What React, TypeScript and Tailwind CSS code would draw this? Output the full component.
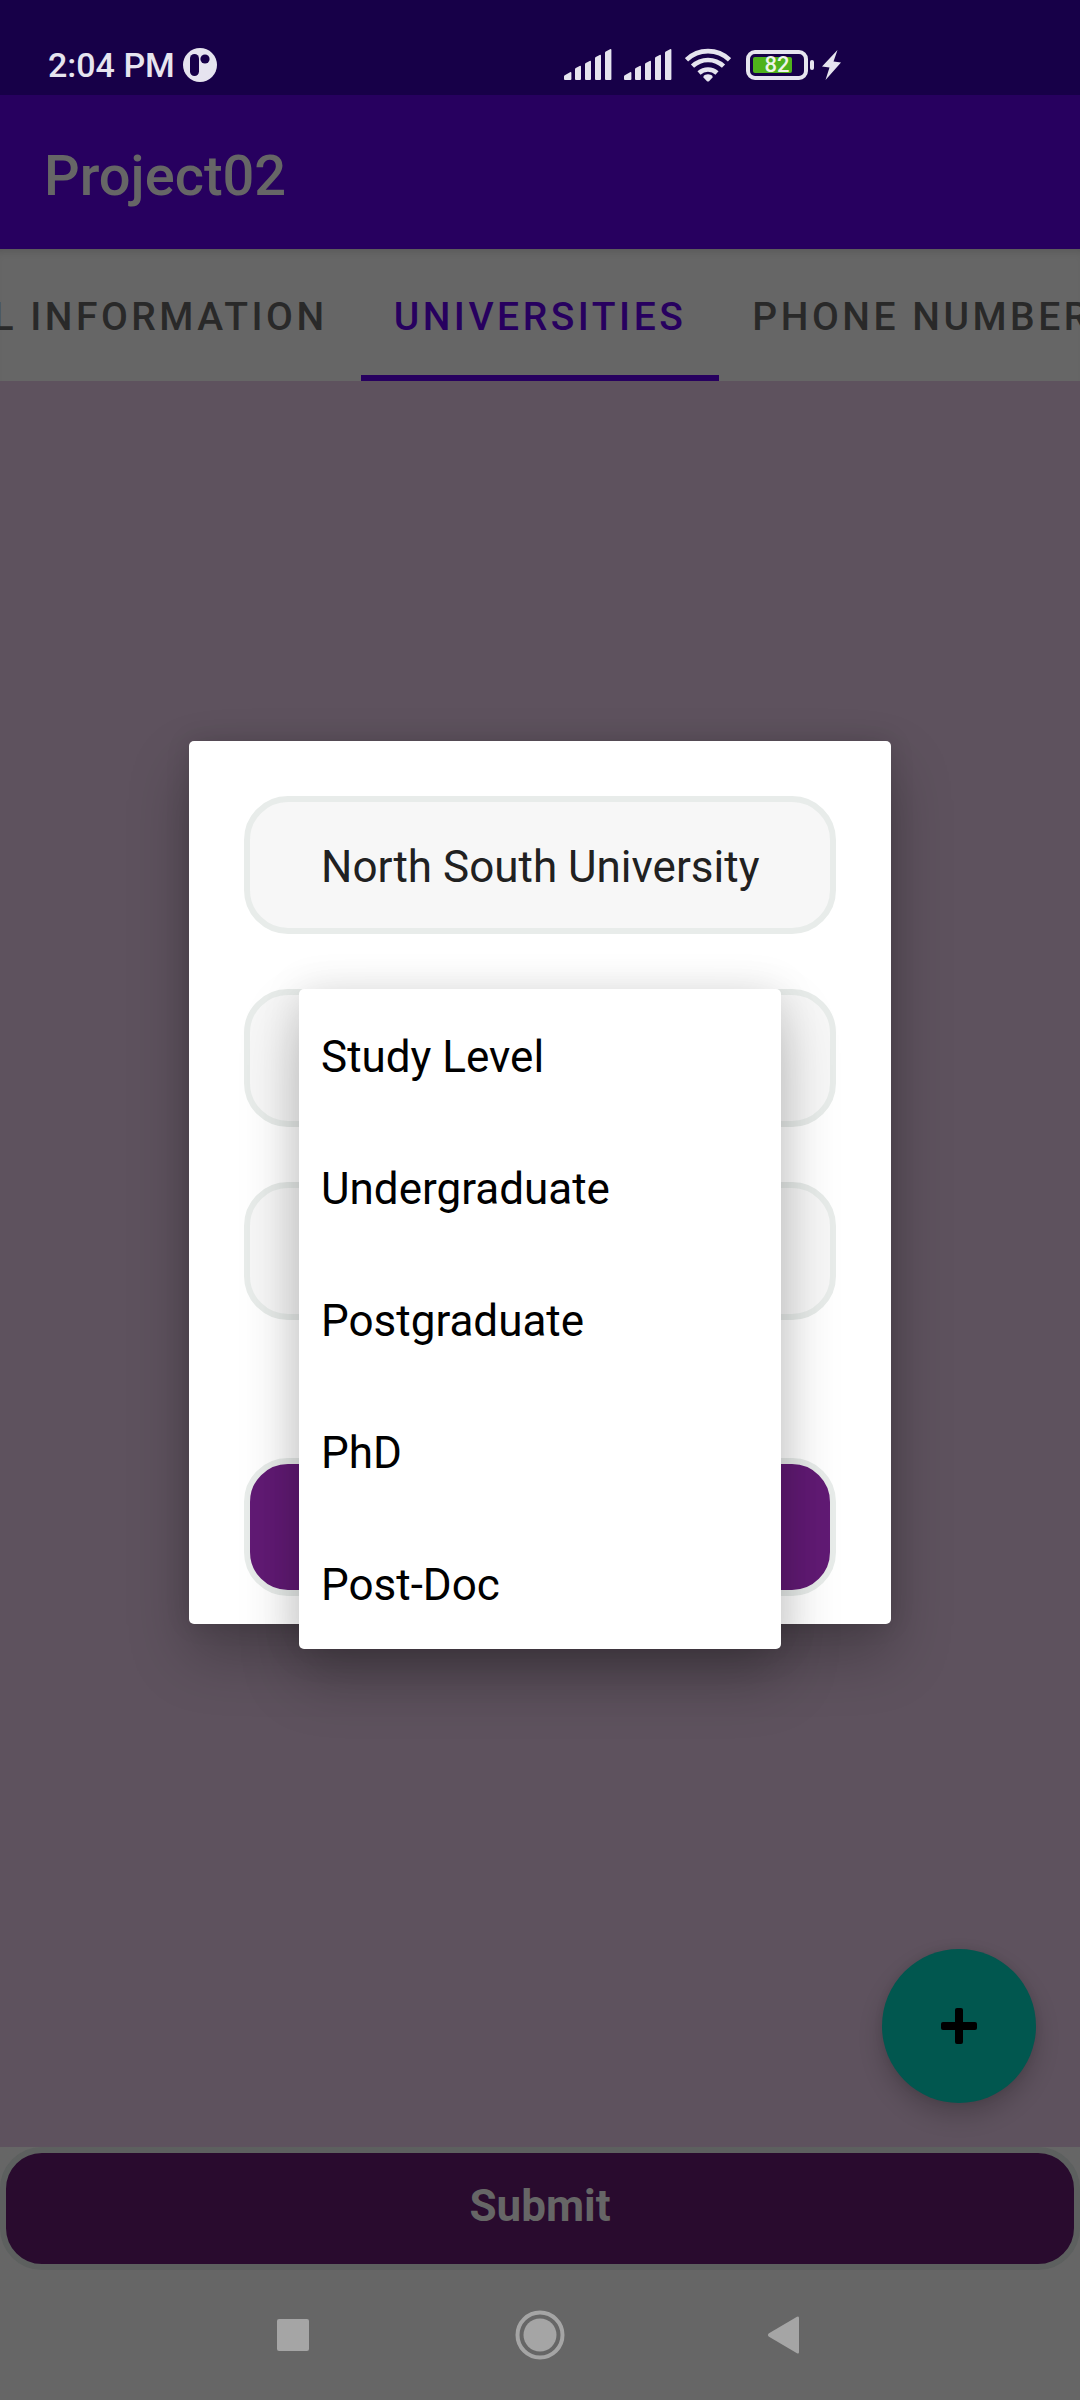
import React, { useState } from "react";

const LEVELS = ["Study Level", "Undergraduate", "Postgraduate", "PhD", "Post-Doc"];

function SignalIcon() {
  return (
    <svg width="48" height="32" viewBox="0 0 48 32" fill="currentColor" aria-hidden="true">
      <path d="M0 27.5Q0 26.6.8 26.2L6 23.2q1.4-.6 1.4.8v6q0 1-1 1H1q-1 0-1-1z" />
      <path d="M11 20.5q0-1 .8-1.4L15.600 17q1.400-.6 1.400.8V30q0 1-1 1h-4q-1 0-1-1z" />
      <path d="M21 15.500q0-1 .8-1.400l3.800-2.200q1.400-.6 1.400.8V30q0 1-1 1h-4q-1 0-1-1z" />
      <path d="M31 9.500q0-1 .8-1.400l3.800-2.200q1.400-.6 1.400.8V30q0 1-1 1h-4q-1 0-1-1z" />
      <path d="M41 4q0-1 .8-1.400L46 .3q1.400-.6 1.400.8V30q0 1-1 1H42q-1 0-1-1z" />
    </svg>
  );
}

function WifiIcon() {
  return (
    <svg width="46" height="34" viewBox="0 0 46 34" fill="none" stroke="currentColor" strokeWidth="4.600" aria-hidden="true">
      <path d="M1.500 11.800a31 31 0 0 1 43 0" />
      <path d="M7.500 18.200a22.500 22.500 0 0 1 31 0" />
      <path d="M14 25a13.500 13.500 0 0 1 18 0" />
      <path d="M23 26.200c2 0 3.400.7 4.500 1.800v1.600L24 33.200q-1 .8-2 0l-3.500-3.600V28c1.100-1.100 2.500-1.800 4.500-1.800z" fill="currentColor" stroke="none" />
    </svg>
  );
}

function Battery({ level }: { level: number }) {
  return (
    <div className="flex items-center gap-[2px]" aria-label={`Battery ${level}%`}>
      <div className="relative h-[30px] w-[62px] rounded-[9px] border-4 border-[#e6e4ef] p-[3px]">
        <div className="h-full rounded-[2px] bg-[#4fb21c]" style={{ width: `${level}%` }} />
        <span className="absolute inset-0 flex items-center justify-center text-[22px] leading-[22px] font-medium text-[#f0f4ea]">
          {level}
        </span>
      </div>
      <div className="h-[10px] w-1 rounded-[2px] bg-[#e6e4ef]" />
    </div>
  );
}

function StatusBar() {
  return (
    <header className="flex h-[95px] items-end justify-between bg-[#170048] pb-[10px] pl-12 pr-[239px] text-[#e6e4ef]">
      <div className="flex items-center gap-2">
        <span className="text-[34px] leading-10 font-medium">2:04 PM</span>
        <svg width="34" height="34" viewBox="0 0 34 34" aria-hidden="true">
          <circle cx="17" cy="17" r="17" fill="#e6e4ef" />
          <rect x="7" y="6" width="9" height="22" rx="4.500" fill="#170048" />
          <circle cx="22" cy="11" r="4.600" fill="#170048" />
        </svg>
      </div>
      <div className="flex h-10 items-center">
        <SignalIcon />
        <span className="ml-3 flex"><SignalIcon /></span>
        <span className="ml-[13px] flex"><WifiIcon /></span>
        <span className="ml-[15px]"><Battery level={82} /></span>
        <svg className="ml-2" width="19" height="30" viewBox="0 0 19 30" fill="currentColor" aria-hidden="true">
          <path d="M15.500 0 0 16.500l7.500 1L3.500 30 19 12.500l-7.500-1z" />
        </svg>
      </div>
    </header>
  );
}

function Tabs() {
  return (
    <nav
      role="tablist"
      className="grid h-[132px] grid-cols-[1fr_auto_1fr] bg-[#666] text-[39px] leading-[44px] font-medium tracking-[0.09em] whitespace-nowrap text-[#292929] shadow-[inset_0_8px_8px_-6px_rgba(0,0,0,0.15)]"
    >
      <div className="flex min-w-0 justify-end overflow-hidden">
        <button role="tab" className="shrink-0 px-[33px] pt-1">PERSONAL INFORMATION</button>
      </div>
      <button role="tab" aria-selected="true" className="border-b-[6px] border-[#27005f] px-[33px] pt-[10px] text-[#27005f]">
        UNIVERSITIES
      </button>
      <div className="flex min-w-0 overflow-hidden">
        <button role="tab" className="shrink-0 px-[33px] pt-1">PHONE NUMBER</button>
      </div>
    </nav>
  );
}

function AddUniversityDialog() {
  const [level, setLevel] = useState(LEVELS[0]);
  const field = "h-[138px] w-full rounded-[44px] border-[6px] border-[#e8ecea] bg-[#f7f7f7]";
  return (
    <div className="absolute inset-0 flex items-center justify-center">
      <form
        role="dialog"
        aria-label="Add university"
        onSubmit={(e) => e.preventDefault()}
        className="flex w-[65%] flex-col gap-[55px] rounded-[5px] bg-white px-[55px] pt-[55px] pb-7 shadow-[0_30px_60px_rgba(0,0,0,0.25),0_0_24px_rgba(0,0,0,0.12)]"
      >
        <select
          aria-label="University"
          className={`${field} appearance-none pt-1 pl-[71px] text-[44px] text-[#212121]`}
        >
          <option>North South University</option>
        </select>
        <div className="relative">
          <button type="button" aria-label="Study level" aria-haspopup="listbox" aria-expanded="true" className={`${field} block`} />
          <ul
            role="listbox"
            aria-label="Study level"
            className="absolute top-0 right-[55px] left-[55px] z-10 rounded-[5px] bg-white shadow-[0_30px_60px_rgba(0,0,0,0.22),0_0_40px_rgba(0,0,0,0.1)]"
          >
            {LEVELS.map((item) => (
              <li key={item} role="option" aria-selected={item === level}>
                <button
                  type="button"
                  onClick={() => setLevel(item)}
                  className="flex h-[132px] w-full items-center px-[22px] pt-1 text-[44px] leading-[52px] text-black"
                >
                  {item}
                </button>
              </li>
            ))}
          </ul>
        </div>
        <select aria-label="Department" className={`${field} appearance-none`} />
        <button
          type="submit"
          aria-label="Save"
          className="mt-[83px] h-[138px] w-full rounded-[44px] border-[6px] border-[#e8ecea] bg-[#611a74]"
        />
      </form>
    </div>
  );
}

function NavigationBar() {
  return (
    <footer className="flex h-[130px] justify-center bg-[#666] text-[#a5a5a5]">
      <div className="grid w-[68%] grid-cols-3">
        <button aria-label="Recent apps" className="flex items-center justify-center">
          <svg width="50" height="50" viewBox="0 0 50 50" fill="currentColor">
            <rect x="7" y="9" width="32" height="32" rx="2" />
          </svg>
        </button>
        <button aria-label="Home" className="flex items-center justify-center">
          <svg width="50" height="50" viewBox="0 0 50 50" fill="currentColor">
            <circle cx="25" cy="25" r="22.500" fill="none" stroke="currentColor" strokeWidth="4" />
            <circle cx="25" cy="25" r="16.500" />
          </svg>
        </button>
        <button aria-label="Back" className="flex items-center justify-center">
          <svg width="50" height="50" viewBox="0 0 50 50" fill="currentColor">
            <path d="M37 6.800q2-1 2 1.200v34q0 2.200-2 1.200L8.600 26.500q-1.600-1.500 0-3z" />
          </svg>
        </button>
      </div>
    </footer>
  );
}

export default function App() {
  return (
    <div className="flex min-h-screen flex-col bg-[#666] font-[Roboto,sans-serif]">
      <StatusBar />
      <div className="relative flex flex-1 flex-col">
        <div className="flex h-[154px] items-center bg-[#27005f] pt-2 pl-11">
          <h1 className="text-[56px] leading-[64px] font-medium text-[#666]">Project02</h1>
        </div>
        <Tabs />
        <main className="flex flex-1 items-end justify-end bg-[#5e525e] p-11">
          <button
            aria-label="Add"
            className="flex size-[154px] items-center justify-center rounded-full bg-[#01574f] shadow-[0_12px_24px_rgba(0,0,0,0.2),0_0_8px_rgba(0,0,0,0.08)]"
          >
            <svg width="36" height="36" viewBox="0 0 36 36" aria-hidden="true">
              <rect x="14" y="0" width="8" height="36" rx="2" />
              <rect x="0" y="14" width="36" height="8" rx="2" />
            </svg>
          </button>
        </main>
        <button className="h-[123px] w-full rounded-[42px] border-[6px] border-[#5d605f] bg-[#290b2e] pb-[6px] text-[44px] leading-[52px] font-bold text-[#666]">
          Submit
        </button>
        <AddUniversityDialog />
      </div>
      <NavigationBar />
    </div>
  );
}
